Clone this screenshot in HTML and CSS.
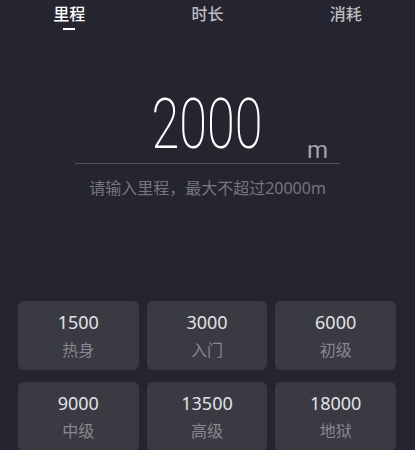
FILE: index.html
```html
<!DOCTYPE html>
<html>
<head>
    <meta charset="UTF-8">
    <meta name="viewport" content="width=device-width, initial-scale=1.0">
    <title>里程</title>
    <link rel="stylesheet" href="styles.css">
</head>
<body>
    <div class="tabs">
        <div class="tab active">里程</div>
        <div class="tab">时长</div>
        <div class="tab">消耗</div>
    </div>

    <div class="field">
        <span></span>
        <span class="value"><span class="digits">2000</span></span>
        <span class="unit">m</span>
    </div>
    <p class="hint">请输入里程，最大不超过20000m</p>

    <div class="presets">
        <div class="preset"><span class="preset-num">1500</span><span class="preset-name">热身</span></div>
        <div class="preset"><span class="preset-num">3000</span><span class="preset-name">入门</span></div>
        <div class="preset"><span class="preset-num">6000</span><span class="preset-name">初级</span></div>
        <div class="preset"><span class="preset-num">9000</span><span class="preset-name">中级</span></div>
        <div class="preset"><span class="preset-num">13500</span><span class="preset-name">高级</span></div>
        <div class="preset"><span class="preset-num">18000</span><span class="preset-name">地狱</span></div>
    </div>
</body>
</html>
```

FILE: styles.css
```css
body {
    margin: 0;
    background-color: #25252f;
    font-family: "Noto Sans", "Noto Sans CJK SC", sans-serif;
    color: #fff;
}
.tabs {
    display: flex;
    height: 32px;
}
.tab {
    flex: 1;
    text-align: center;
    font-size: 16px;
    font-weight: 500;
    line-height: 20px;
    padding-top: 4px;
    color: #bdbdc0;
}
.tab.active {
    color: #fff;
}
.tab.active::after {
    content: "";
    display: block;
    width: 12px;
    height: 2px;
    margin: 4px auto 0;
    background-color: #fff;
}
.field {
    width: 265px;
    margin: 57px auto 0;
    display: grid;
    grid-template-columns: 1fr auto 1fr;
    padding-bottom: 4px;
    border-bottom: 1px solid #52525a;
}
.value {
    font-family: Roboto, sans-serif;
    font-weight: 200;
    font-size: 70px;
    line-height: 70px;
}
.digits {
    display: inline-block;
    transform: scaleX(0.72);
}
.unit {
    justify-self: end;
    align-self: end;
    margin-right: 12px;
    margin-bottom: -3px;
    font-family: Roboto, sans-serif;
    font-size: 24px;
    line-height: 24px;
    color: #a3a3a8;
}
.hint {
    margin: 14px 0 0;
    text-align: center;
    font-size: 16px;
    line-height: 20px;
    color: #76767d;
}
.presets {
    display: grid;
    grid-template-columns: repeat(3, 1fr);
    gap: 12px 8px;
    margin-top: 103px;
    padding: 0 19px 0 18px;
}
.preset {
    height: 69px;
    box-sizing: border-box;
    padding-top: 10px;
    border-radius: 6px;
    background-color: #393a42;
    display: flex;
    flex-direction: column;
    align-items: center;
    gap: 6px;
}
.preset-num {
    font-size: 18px;
    line-height: 22px;
    color: #e2e2e4;
}
.preset-name {
    font-size: 16px;
    line-height: 22px;
    color: #88888e;
}
```
